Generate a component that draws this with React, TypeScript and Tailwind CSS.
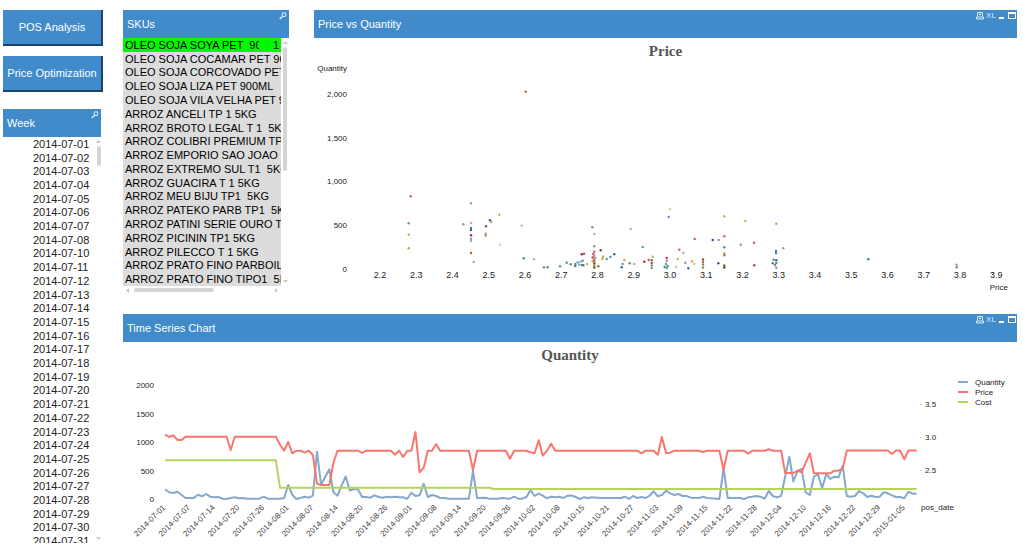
import type { ReactNode } from 'react';

const weeks = [
  '2014-07-01', '2014-07-02', '2014-07-03', '2014-07-04', '2014-07-05', '2014-07-06',
  '2014-07-07', '2014-07-08', '2014-07-10', '2014-07-11', '2014-07-12', '2014-07-13',
  '2014-07-14', '2014-07-15', '2014-07-16', '2014-07-17', '2014-07-18', '2014-07-19',
  '2014-07-20', '2014-07-21', '2014-07-22', '2014-07-23', '2014-07-24', '2014-07-25',
  '2014-07-26', '2014-07-27', '2014-07-28', '2014-07-29', '2014-07-30', '2014-07-31',
];

const skus = [
  'OLEO SOJA COCAMAR PET 900ML',
  'OLEO SOJA CORCOVADO PET 900ML',
  'OLEO SOJA LIZA PET 900ML',
  'OLEO SOJA VILA VELHA PET 900ML',
  'ARROZ ANCELI TP 1 5KG',
  'ARROZ BROTO LEGAL T 1  5KG',
  'ARROZ COLIBRI PREMIUM TP1 5KG',
  'ARROZ EMPORIO SAO JOAO T1 5KG',
  'ARROZ EXTREMO SUL T1  5KG',
  'ARROZ GUACIRA T 1 5KG',
  'ARROZ MEU BIJU TP1  5KG',
  'ARROZ PATEKO PARB TP1  5KG',
  'ARROZ PATINI SERIE OURO T1 5KG',
  'ARROZ PICININ TP1 5KG',
  'ARROZ PILECCO T 1 5KG',
  'ARROZ PRATO FINO PARBOIL 5KG',
  'ARROZ PRATO FINO TIPO1  5KG',
];

type Dot = [number, number, string];

const dots: Dot[] = [
  [525.7, 91.7, '#b5683a'], [410.7, 196.3, '#c8606a'], [408.7, 223.3, '#5f96b4'], [408.7, 234.7, '#d9a860'],
  [408.7, 248.3, '#bfa24c'], [463.3, 224.3, '#8b9a94'], [471, 203.3, '#9a9a9a'], [471, 223, '#e39aa4'],
  [471, 228, '#3a78ad'], [471, 230, '#35688f'], [471, 235.3, '#a82a3a'], [471, 238.7, '#7f9fa0'],
  [471, 241, '#7fb8b4'], [471, 253, '#a5652c'], [473.7, 262, '#9aa39a'], [486, 226.3, '#3f6aa0'],
  [485.7, 233.7, '#a58a6a'], [485.7, 235.5, '#c09060'], [490, 220.3, '#2d5590'], [491.3, 222, '#b8b04c'],
  [499.3, 214.7, '#bfae50'], [500, 244.7, '#c3d9bd'], [521.7, 225.7, '#a9c4bf'], [523.7, 258.3, '#3f9a45'],
  [534, 259.3, '#a8b8a0'], [544, 267.3, '#6f9080'], [547.7, 267.3, '#5f8580'], [560, 266.3, '#6a9a80'],
  [566.7, 262.7, '#5f9068'], [570.7, 264.3, '#5c8a58'], [575.3, 264, '#6f9060'], [575.3, 266, '#4f7a60'],
  [577.7, 262.3, '#6aa0c4'], [579, 264.5, '#7aa8c8'], [580.7, 261.7, '#88b4cf'], [582.7, 260.7, '#6a88a0'],
  [581.7, 265, '#7a6aa0'], [583.3, 265.3, '#4f7a8a'], [587, 264, '#c8b060'], [581.7, 254.3, '#a02a3a'],
  [584, 253.7, '#b05060'], [592.3, 227.3, '#5f9aa4'], [594.3, 234, '#8fb4bc'], [594.3, 246.3, '#6f9a84'],
  [594.3, 251.7, '#d06a74'], [593.3, 254, '#c8485a'], [594.3, 256, '#d4808a'], [592.6, 257.5, '#c05060'],
  [594.3, 259, '#5f8a9a'], [595.3, 258, '#c8a468'], [594.3, 261, '#a86a4a'], [592.6, 261, '#d09a50'],
  [594.3, 263.3, '#b83a3a'], [594.3, 265.3, '#b8883c'], [594.3, 267.5, '#7a3a22'], [598.3, 266.3, '#8a7040'],
  [600.7, 250.3, '#a8303c'], [603, 256.7, '#d89a4a'], [602.3, 259, '#d8b05a'], [606.7, 259, '#3fa0c0'],
  [610.3, 257, '#4a94bc'], [614.3, 254.3, '#2f6a98'], [621.7, 267.3, '#3a6a9a'], [622.7, 264, '#6a94b4'],
  [624.3, 260, '#c8a070'], [629.7, 263.3, '#5a9a60'], [634.3, 264, '#a0c0a0'], [630.7, 229, '#a0b0c0'],
  [642.7, 247, '#5aa05a'], [644.3, 261.7, '#a02a38'], [648.7, 260, '#c85a4a'], [652.7, 256.7, '#dca850'],
  [651.7, 260.3, '#4f8a50'], [651.7, 263, '#b04a4a'], [651.7, 265.5, '#5f9a80'], [651.7, 268, '#b08a70'],
  [666.7, 258, '#b83a48'], [666.7, 260.7, '#c87a84'], [666, 264, '#5f9aa8'], [667.7, 266, '#4a90a4'],
  [664.7, 267, '#3f8a70'], [666.7, 268, '#5aa090'], [668.7, 217, '#9a7ac8'], [670, 209.3, '#d8cca0'],
  [677.7, 259, '#b8b470'], [676.3, 267, '#b8c89a'], [679.3, 249.7, '#d0605a'], [683.3, 253, '#a4b0c0'],
  [685.3, 262.7, '#7a94c0'], [688.3, 268.3, '#3a68a8'], [692, 261.3, '#e0a040'], [694.3, 264, '#d8c080'],
  [694.7, 239, '#c85060'], [703, 259.5, '#b03a44'], [703, 262, '#b86a50'], [703, 264.5, '#8a8a54'],
  [703, 267.5, '#9a7a5a'], [712.7, 240, '#3f4a8a'], [718.7, 240, '#8a90b8'], [718.3, 263.3, '#3a4a98'],
  [724.3, 216.3, '#c4b050'], [724.3, 236.3, '#c8686c'], [724.3, 247.3, '#4a88b8'], [724.3, 253.5, '#b89450'],
  [724.3, 255.3, '#a08068'], [724.3, 265.5, '#6a6a34'], [724.3, 267.5, '#3a4a24'], [745.3, 221, '#b8b868'],
  [740.7, 244.7, '#8fa4a8'], [754, 242.7, '#d05a54'], [754.3, 265.3, '#a83848'], [776.3, 223.7, '#a4ac5c'],
  [783.3, 248.3, '#8fa48c'], [776, 251, '#2f7a8a'], [776, 253.3, '#4a94a0'], [773.7, 259.7, '#5a8a94'],
  [772.7, 263.3, '#4f7a80'], [776.3, 260.3, '#3f6a78'], [776.3, 263, '#5a8a98'], [775, 265, '#6f8a8a'],
  [776.3, 267.7, '#b87a70'], [868.3, 259.3, '#2f80a4'], [956.7, 264.7, '#9a9a9a'], [956.7, 267.3, '#808890'],
];

// [position on the date axis, y], flat stretches only list their ends
type Point = [number, number];

const price: Point[] = [
  [0, 434.7], [1, 437], [2, 435.3], [3, 439.7], [4, 440.3], [5, 436.7], [15, 436.7], [16, 450], [17, 436.7],
  [27, 436.7], [28, 444.7], [29, 450.7], [30, 442], [31, 453.3], [32, 450.7], [33, 450.7], [34, 452.7],
  [35, 450.7], [36, 455], [37, 483.7], [38, 485], [40, 485], [41, 462.7], [42, 450.7], [47, 450.7], [48, 453],
  [49, 450.7], [55, 450.7], [56, 454.7], [57, 450.7], [58, 457], [59, 450.7], [60, 450.7], [61, 432],
  [62, 472.3], [63, 467.7], [64, 450.7], [65, 450.7], [66, 444], [67, 450.7], [74, 450.7], [75, 470],
  [76, 450.7], [83, 450.7], [84, 458.7], [85, 450.7], [88, 450.7], [89, 452.3], [90, 453.3], [91, 440.3],
  [92, 455.7], [93, 450.7], [94, 443.7], [95, 450.7], [115, 450.7], [116, 453.3], [117, 450.7], [119, 450.7],
  [120, 454.7], [121, 437], [122, 453], [123, 452.7], [124, 450.7], [130, 450.7], [131, 452], [132, 450.7],
  [135, 450.7], [136, 470], [137, 450.7], [141, 450.7], [142, 453.7], [143, 450.7], [146, 450.7], [147, 449.3],
  [148, 450.7], [150, 450.7], [151, 473], [153, 473], [154, 470.7], [155, 472.3], [156, 462.7], [157, 453.3],
  [158, 473.3], [162, 473.3], [163, 470.7], [164, 470.7], [165, 468.7], [166, 450.5], [176, 450.5], [177, 454],
  [178, 450.5], [179, 450.5], [180, 459.3], [181, 450.5], [183, 450.5],
];

const cost: Point[] = [[0, 460.3], [27, 460.3], [28, 487.8], [79, 487.8], [80, 489], [183, 489]];

const quantity: Point[] = [
  [0, 489.3], [1, 492.3], [2, 493], [3, 491.7], [4, 494.7], [5, 498], [7, 498], [8, 494.7], [9, 496.3],
  [10, 494], [11, 496.7], [12, 497.3], [13, 497], [14, 498.7], [15, 499], [16, 498], [17, 497.3], [18, 498.3],
  [19, 498], [20, 498.7], [23, 498.7], [24, 496.7], [25, 498.7], [28, 498.7], [29, 498], [30, 485],
  [31, 494.7], [32, 499], [33, 498], [34, 496.7], [35, 497.7], [36, 495.7], [37, 451.7], [38, 485],
  [39, 476.7], [40, 469.3], [41, 492.3], [42, 495.7], [43, 485.7], [44, 476.5], [45, 490.5], [46, 489],
  [47, 489.3], [48, 497], [49, 497], [50, 497.7], [51, 495.3], [52, 497], [53, 497.7], [54, 496.7],
  [55, 497.3], [56, 496.7], [57, 497.3], [58, 497.3], [59, 498.7], [60, 492.7], [61, 496], [62, 495.3],
  [63, 483.7], [64, 497], [65, 495], [66, 496], [67, 498], [68, 498], [69, 498.7], [74, 498.7], [75, 471],
  [76, 498], [78, 497.7], [79, 498.7], [81, 498.7], [82, 498], [84, 498.7], [85, 496.7], [86, 498.7],
  [87, 498.7], [88, 497], [89, 490], [90, 496], [91, 493.7], [92, 495.7], [93, 498.3], [94, 496.7],
  [95, 497.3], [96, 496.7], [97, 498], [98, 495.7], [99, 495.5], [100, 497], [101, 499], [102, 497.3],
  [103, 498], [104, 497.3], [106, 498], [111, 498], [112, 496.7], [113, 499], [114, 496], [115, 498],
  [116, 497], [117, 498], [118, 495.7], [119, 491.3], [120, 496.3], [121, 495], [122, 490.7], [123, 493.3],
  [124, 495], [125, 494], [126, 496], [127, 496], [128, 497.7], [130, 498], [131, 496.7], [132, 498],
  [135, 499], [136, 468], [137, 498], [140, 498], [141, 499], [142, 497.3], [143, 496.7], [144, 496],
  [145, 496.7], [146, 498.7], [147, 491], [148, 496], [149, 497.3], [150, 496], [151, 476.3], [152, 456.7],
  [153, 481.5], [154, 471], [155, 469], [156, 492.3], [157, 495], [158, 476.7], [159, 474.3], [160, 488.3],
  [161, 474], [162, 479], [163, 476.7], [164, 477.3], [165, 465.7], [166, 496], [167, 496.7], [168, 496],
  [169, 491], [170, 493.3], [171, 497], [172, 495.7], [173, 497], [174, 496.7], [175, 492.3], [176, 493.3],
  [177, 495.3], [178, 497], [179, 497], [180, 498.3], [181, 491.7], [182, 493.7], [183, 493.7],
];

// one label every six dates
const dateTicks = [
  '2014-07-01', '2014-07-07', '2014-07-14', '2014-07-20', '2014-07-26', '2014-08-01', '2014-08-07',
  '2014-08-14', '2014-08-20', '2014-08-26', '2014-09-01', '2014-09-08', '2014-09-14', '2014-09-20',
  '2014-09-26', '2014-10-02', '2014-10-08', '2014-10-15', '2014-10-21', '2014-10-27', '2014-11-03',
  '2014-11-09', '2014-11-15', '2014-11-22', '2014-11-28', '2014-12-04', '2014-12-10', '2014-12-16',
  '2014-12-22', '2014-12-29', '2015-01-05',
];

const legend = [
  { name: 'Quantity', color: '#86a8cf' },
  { name: 'Price', color: '#f8766d' },
  { name: 'Cost', color: '#b5d55a' },
];

const dateX = (i: number) => 165 + i * 4.107;
const toLine = (points: Point[]) => points.map(([i, y]) => `${dateX(i).toFixed(1)},${y}`).join(' ');

function PanelHeader({ title, children }: { title: string; children?: ReactNode }) {
  return (
    <header className="flex h-7 items-center justify-between bg-[#428bca] pl-1 text-white">
      <h2>{title}</h2>
      <div className="flex self-start">{children}</div>
    </header>
  );
}

function SearchButton({ label }: { label: string }) {
  return (
    <button type="button" aria-label={label} className="px-0.5 pt-0.5">
      <svg width="8" height="8" viewBox="0 0 8 8" fill="none" stroke="#d8ecff">
        <circle cx="5" cy="2.7" r="1.9" strokeWidth="1.1" />
        <path d="M3.6 4.2 0.8 7" strokeWidth="1.5" />
      </svg>
    </button>
  );
}

function ChartButtons() {
  return (
    <div className="flex items-center gap-0.5 pr-px pt-0.5">
      <button type="button" aria-label="Print">
        <svg width="8" height="8" viewBox="0 0 8 8" fill="none" stroke="#d8ecff">
          <path d="M1.5 4.5v-4h5v4M3 2.5h2M4 1.5v2" />
          <path d="M0.5 7V5h7v2z" />
        </svg>
      </button>
      <button type="button" className="w-[10px] text-[8px] leading-[8px] text-[#d8ecff]">XL</button>
      <button type="button" aria-label="Minimize">
        <svg width="8" height="8" viewBox="0 0 8 8">
          <path d="M1 5h5v2H1z" fill="#fff" />
        </svg>
      </button>
      <button type="button" aria-label="Maximize">
        <svg width="8" height="8" viewBox="0 0 8 8" fill="none" stroke="#fff">
          <path d="M0.5 0.5h7v6h-7z" strokeWidth="1" />
          <path d="M0 1h8" strokeWidth="2" />
        </svg>
      </button>
    </div>
  );
}

function Arrow({ d }: { d: string }) {
  return (
    <svg width="5" height="5" viewBox="0 0 5 5" className="shrink-0">
      <path d={d} fill="#c8c8c8" />
    </svg>
  );
}

function ScatterChart() {
  const xTicks = Array.from({ length: 18 }, (_, i) => (2.2 + i / 10).toFixed(1));
  const yTicks = ['0', '500', '1,000', '1,500', '2,000'];

  return (
    <svg viewBox="314 64 703 232" className="block h-auto w-full" fill="#222" role="img" aria-label="Price vs Quantity">
      <text x="347" y="71" textAnchor="end" className="text-[8px]">Quantity</text>
      {yTicks.map((tick, i) => (
        <text key={tick} x="347" y={272 - i * 43.8} textAnchor="end" className="text-[8px]">{tick}</text>
      ))}
      {xTicks.map((tick, i) => (
        <text key={tick} x={380 + i * 36.25} y="278" textAnchor="middle" className="text-[9px]">{tick}</text>
      ))}
      <text x="1008" y="290" textAnchor="end" className="text-[8px]">Price</text>
      {dots.map(([x, y, color], i) => (
        <circle key={i} cx={x} cy={y} r="1.2" fill={color} />
      ))}
    </svg>
  );
}

function TimeSeriesChart() {
  return (
    <svg viewBox="123 368 894 178" className="block h-auto w-full" fill="#222" role="img" aria-label="Time Series Chart">
      {['0', '500', '1000', '1500', '2000'].map((tick, i) => (
        <text key={tick} x="154" y={502 - i * 28.5} textAnchor="end" className="text-[8px]">{tick}</text>
      ))}
      {['2.5', '3.0', '3.5'].map((tick, i) => (
        <g key={tick}>
          <path d={`M920 ${470.5 - i * 33}h2`} stroke="#ccc" />
          <text x="925" y={473 - i * 33} className="text-[8px]">{tick}</text>
        </g>
      ))}
      {dateTicks.map((date, i) => (
        <text
          key={date}
          textAnchor="end"
          transform={`translate(${(dateX(i * 6) + 1).toFixed(1)} 508) rotate(-45)`}
          className="text-[8px]"
          fill="#444"
        >
          {date}
        </text>
      ))}
      <text x="921" y="510" className="text-[8px]">pos_date</text>

      <g fill="none" strokeWidth="2" strokeLinejoin="round">
        <polyline points={toLine(quantity)} stroke="#86a8cf" />
        <polyline points={toLine(price)} stroke="#f8766d" />
        <polyline points={toLine(cost)} stroke="#b5d55a" />
      </g>

      {legend.map((item, i) => (
        <g key={item.name}>
          <path d={`M958 ${382 + i * 10}h10`} stroke={item.color} strokeWidth="2" />
          <text x="975" y={385 + i * 10} className="text-[8px]">{item.name}</text>
        </g>
      ))}
    </svg>
  );
}

export default function App() {
  return (
    <main className="flex gap-5 bg-white pl-[3px] pr-[7px] pt-2.5 font-['Liberation_Sans',Arial,sans-serif] text-[11px] text-[#222]">
      <aside className="w-[100px] shrink-0">
        <nav className="flex flex-col gap-2.5">
          <button type="button" className="h-9 border-b-2 border-r-2 border-[#1d4468] bg-[#428bca] text-white">
            POS Analysis
          </button>
          <button type="button" className="h-9 whitespace-nowrap border-b-2 border-r-2 border-[#1d4468] bg-[#428bca] text-white">
            Price Optimization
          </button>
        </nav>

        <section className="mr-0.5 mt-[17px]">
          <PanelHeader title="Week">
            <SearchButton label="Search week" />
          </PanelHeader>
          <div className="flex h-[406px] justify-between overflow-hidden">
            <ul className="grid h-[411px] auto-rows-fr pl-[30px]">
              {weeks.map((week) => (
                <li key={week} className="flex items-center leading-3">{week}</li>
              ))}
            </ul>
            <div className="flex flex-col items-center py-0.5">
              <Arrow d="M0 4h5L2.5 1z" />
              <div className="mt-0.5 h-5 w-1 rounded-sm bg-[#d4d4d4]" />
              <div className="grow" />
              <Arrow d="M0 1h5L2.5 4z" />
            </div>
          </div>
        </section>
      </aside>

      <div className="flex min-w-0 flex-1 flex-col gap-[18px]">
        <div className="flex gap-[25px]">
          <section className="w-[166px] shrink-0">
            <PanelHeader title="SKUs">
              <SearchButton label="Search SKUs" />
            </PanelHeader>
            <div className="flex h-[248px]">
              <ul className="grid min-w-0 flex-1 auto-rows-fr grid-cols-1 overflow-hidden whitespace-pre bg-[#dcdcdc] text-black">
                <li className="flex items-center bg-[#00f800] px-0.5 leading-3">
                  <span className="min-w-0 flex-1 overflow-hidden">OLEO SOJA SOYA PET  900ML</span>
                  <span className="w-5 text-right">1</span>
                </li>
                {skus.map((sku) => (
                  <li key={sku} className="flex items-center overflow-hidden pl-0.5 leading-3">{sku}</li>
                ))}
              </ul>
              <div className="flex w-2 flex-col items-center py-0.5">
                <Arrow d="M0 4h5L2.5 1z" />
                <div className="mt-0.5 h-[124px] w-1 rounded-sm bg-[#d4d4d4]" />
                <div className="grow" />
                <Arrow d="M0 1h5L2.5 4z" />
              </div>
            </div>
            <div className="flex h-2 items-center gap-1 pl-0.5 pr-2.5">
              <Arrow d="M4 0v5L1 2.5z" />
              <div className="h-1 w-20 rounded-sm bg-[#d4d4d4]" />
              <div className="grow" />
              <Arrow d="M1 0v5L4 2.5z" />
            </div>
          </section>

          <section className="min-w-0 flex-1">
            <PanelHeader title="Price vs Quantity">
              <ChartButtons />
            </PanelHeader>
            <h3 className="h-[26px] text-center font-['Liberation_Serif',serif] text-[15px] font-bold leading-[26px] text-[#555]">
              Price
            </h3>
            <ScatterChart />
          </section>
        </div>

        <section>
          <PanelHeader title="Time Series Chart">
            <ChartButtons />
          </PanelHeader>
          <h3 className="h-[26px] text-center font-['Liberation_Serif',serif] text-[15px] font-bold leading-[26px] text-[#555]">
            Quantity
          </h3>
          <TimeSeriesChart />
        </section>
      </div>
    </main>
  );
}
